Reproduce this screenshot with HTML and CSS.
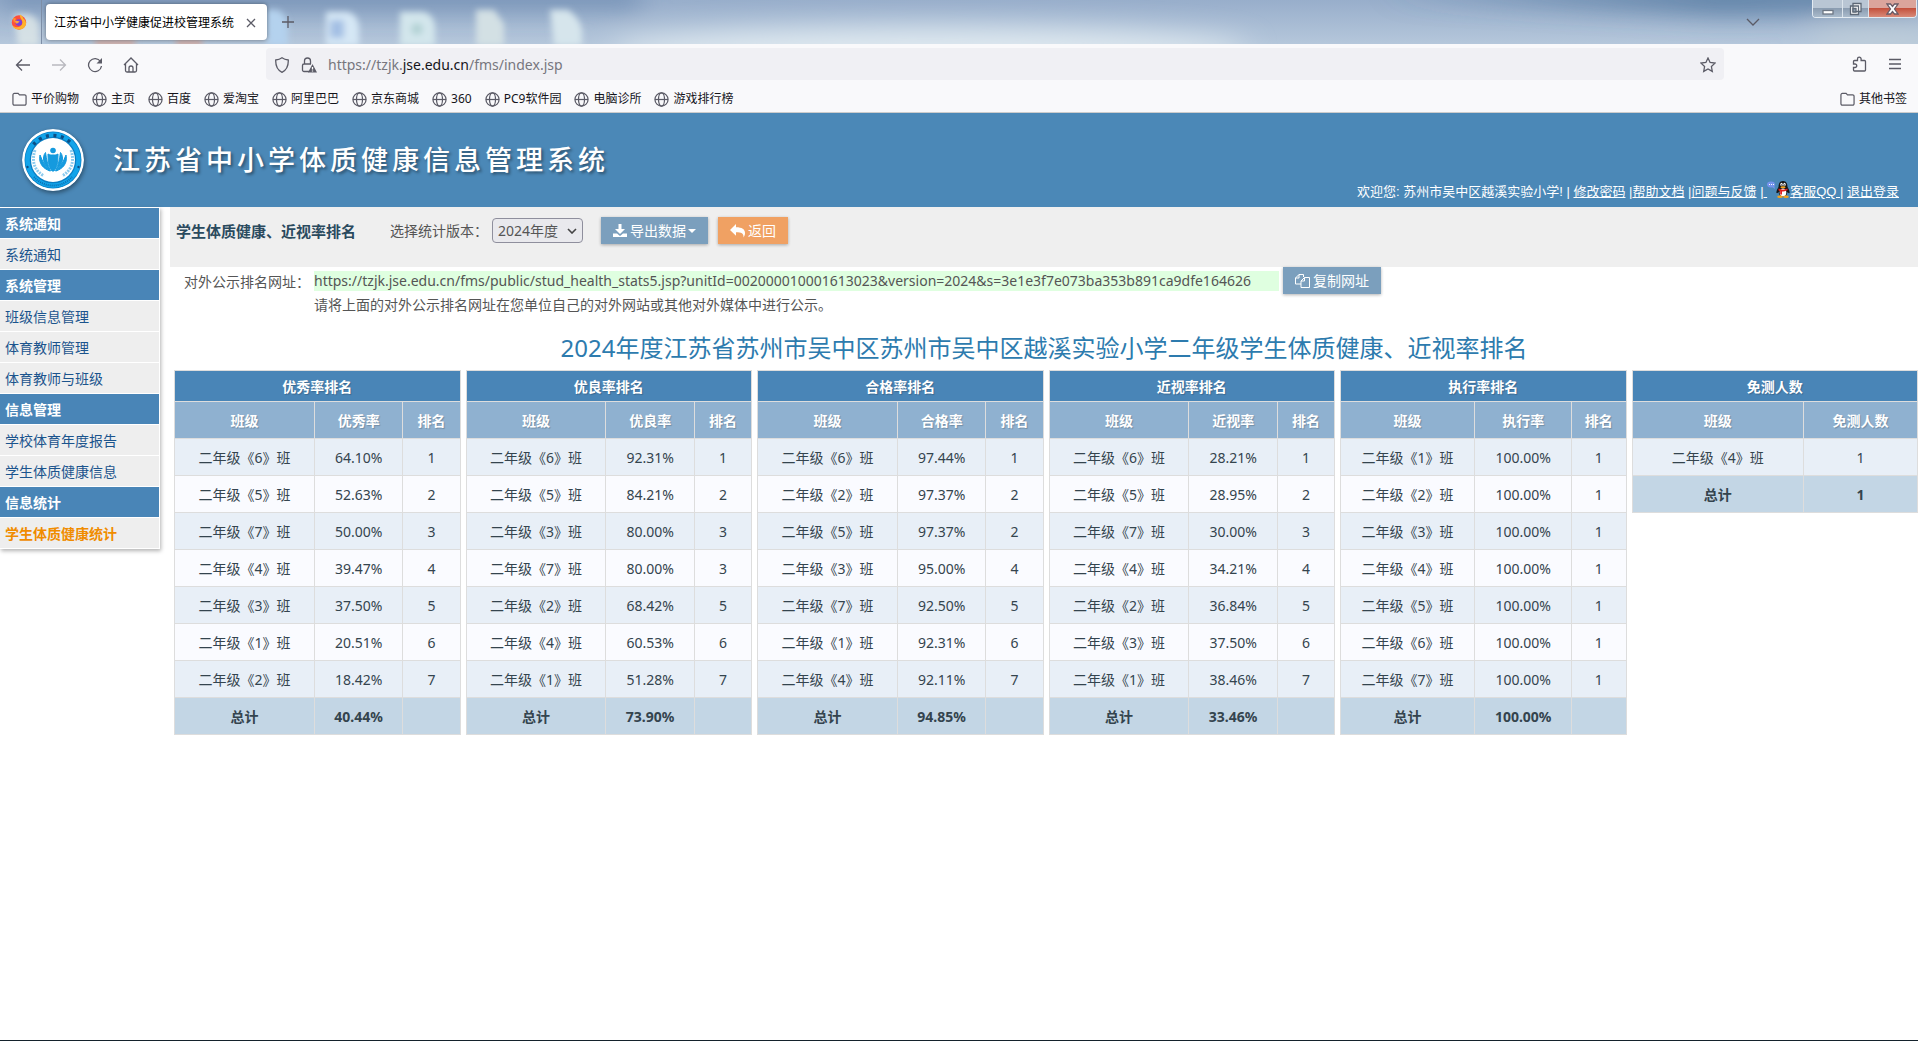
FILE: index.html
```html
<!DOCTYPE html>
<html lang="zh-CN">
<head>
  <meta charset="UTF-8" />
  <title>江苏省中小学健康促进校管理系统</title>
  <meta name="viewport" content="width=device-width, initial-scale=1.0" />
  <link rel="stylesheet" href="styles.css">
</head>
<body>
  <!-- shared icons -->
  <svg class="symbols" aria-hidden="true">
    <symbol id="folder" viewBox="0 0 16 16"><path d="M2.5 14h11a1.500 1.500 0 0 0 1.500-1.500v-8A1.500 1.500 0 0 0 13.500 3H8L6.500 1.500h-4A1.500 1.500 0 0 0 1 3v9.500A1.500 1.500 0 0 0 2.500 14z"/></symbol>
    <symbol id="globe" viewBox="0 0 16 16"><circle cx="8" cy="8" r="7"/><ellipse cx="8" cy="8" rx="3.200" ry="7"/><path d="M1 8h14"/></symbol>
  </svg>

  <div class="browser">
    <div class="tabbar">
      <svg class="glass" preserveAspectRatio="none" viewBox="0 0 1918 44" aria-hidden="true">
        <defs>
          <filter id="soft" x="-20%" y="-20%" width="140%" height="140%"><feGaussianBlur stdDeviation="3"/></filter>
          <filter id="haze" x="-20%" y="-60%" width="140%" height="220%"><feGaussianBlur stdDeviation="14"/></filter>
        </defs>
        <g filter="url(#haze)">
          <ellipse cx="930" cy="50" rx="320" ry="22" fill="#dfe9f0"/>
          <path d="M1380-10h540v16l-200 4z" fill="#436c95"/>
          <path d="M0-10h640v14H0z" fill="#5a7ba6"/>
          <ellipse cx="1880" cy="40" rx="70" ry="14" fill="#bfced9"/>
        </g>
        <g filter="url(#soft)">
          <path d="M14 14h12q14 2 13 16v16H18z" fill="#dfe8e8" opacity=".8"/>
          <path d="M266 10h12q10 6 10 18v18h-20z" fill="#b4d2ee"/>
          <path d="M326 12h22q11 4 11 16v18h-33z" fill="#d5e7f5"/>
          <path d="M330 20h14v18h-14z" fill="#a4c0e4"/>
          <path d="M400 12h24q11 4 11 16v18h-35z" fill="#d3e6ec"/>
          <circle cx="417" cy="29" r="6" fill="#b2d2d4"/>
          <path d="M476 10h18l10 14v22h-28z" fill="#d3e0e4"/>
          <path d="M550 10h18q12 8 14 20v16h-28z" fill="#d6e5ec"/>
          <path d="M95 40h40v6H95zM176 40h26v6h-26z" fill="#d9a79a"/>
        </g>
      </svg>
      <svg class="firefox" viewBox="0 0 16 16" aria-label="Firefox">
        <circle cx="8" cy="8.500" r="7.200" fill="#ff4f3a"/>
        <path d="M9 .5c2 1.200 3 2.500 3.300 4C14 5.500 15.500 8 15 10.500c-.8 3-3.500 5-7 5-3 0-5.500-1.500-6.600-4 4 3.500 9.500 1.500 10-2.500C11.800 5.500 8.500 4.500 9 .5z" fill="#ffb22c"/>
        <path d="M2 4c1 .3 2 .3 3 .4L3 9z" fill="#ff9a2b"/>
        <circle cx="7.800" cy="8.600" r="3.300" fill="#7b41d8"/>
        <path d="M4 7c2-.8 3 .5 4.500.2-.4 1.500-2 1.500-2.500 2.500-1.200-.3-2-1.200-2-2.700z" fill="#ffa436"/>
      </svg>
      <div class="tab">
        <span>江苏省中小学健康促进校管理系统</span>
        <button class="tab-close" aria-label="关闭标签页"><svg width="10" height="10" viewBox="0 0 10 10"><path d="M1 1l8 8M9 1L1 9"/></svg></button>
      </div>
      <button class="tab-new" aria-label="新建标签页"><svg width="12" height="12" viewBox="0 0 12 12"><path d="M6 0v12M0 6h12"/></svg></button>
      <button class="tab-list" aria-label="列出标签页"><svg width="14" height="8" viewBox="0 0 14 8"><path d="M1 1l6 6 6-6"/></svg></button>
      <div class="window-buttons">
        <button aria-label="最小化"><svg width="12" height="14" viewBox="0 0 12 14"><rect x="1" y="8.500" width="10" height="3.500" fill="#fff" stroke="#6d7784"/></svg></button>
        <button aria-label="还原"><svg width="13" height="14" viewBox="0 0 13 14"><path d="M4 1.500h8v8H4zM1.500 4h8v8.500h-8z" fill="#fff" stroke="#5d6876"/><path d="M4 6.500h3v3.500H4z" fill="#8fa0b2" stroke="#5d6876"/></svg></button>
        <button class="win-close" aria-label="关闭"><svg width="13" height="12" viewBox="0 0 13 12"><path d="M1 1h3.500l2 2.500L8.500 1H12L8.500 6l3.500 5H8.500l-2-2.500-2 2.500H1l3.500-5z" fill="#fff" stroke="#6a5b66"/></svg></button>
      </div>
    </div>

    <div class="navbar">
      <div class="nav-buttons">
        <button aria-label="后退"><svg width="16" height="16" viewBox="0 0 16 16"><path d="M15 8H2M7 2.500L1.500 8 7 13.500"/></svg></button>
        <button aria-label="前进" disabled><svg width="16" height="16" viewBox="0 0 16 16"><path d="M1 8h13M9 2.500L14.500 8 9 13.500"/></svg></button>
        <button aria-label="刷新"><svg width="16" height="16" viewBox="0 0 16 16"><path d="M13.500 4.500A6.500 6.500 0 1 0 14.500 9"/><path d="M15 1v5.500H9.500z" fill="#5b5b66" stroke="none"/></svg></button>
        <button aria-label="主页"><svg width="16" height="16" viewBox="0 0 16 16"><path d="M1 8l7-7 7 7M2.500 7v6.500a1.500 1.500 0 0 0 1.500 1.500h8a1.500 1.500 0 0 0 1.500-1.500V7M6 15v-4a2 2 0 0 1 4 0v4"/></svg></button>
      </div>
      <div class="address">
        <svg width="16" height="16" viewBox="0 0 16 16"><path d="M8 .8c2 1.500 4 2 6.300 2.200C14.500 9 13 13 8 15.300 3 13 1.500 9 1.700 3 4 2.800 6 2.300 8 .8z"/></svg>
        <svg width="16" height="16" viewBox="0 0 16 16"><path d="M8 14.500H3A1.500 1.500 0 0 1 1.500 13V8.500A1.500 1.500 0 0 1 3 7h7M3.500 7V4a3 3 0 0 1 6 0v3"/><path d="M11.500 7L16 15.500H7z" fill="#5b5b66" stroke="none"/><path d="M11.500 10v2.500M11.500 13.500v1" stroke="#fff"/></svg>
        <span class="url">https://tzjk.<b>jse.edu.cn</b>/fms/index.jsp</span>
        <button aria-label="为此页添加书签"><svg width="16" height="16" viewBox="0 0 16 16"><path d="M8 1l2.100 4.500 4.900.6-3.600 3.400.9 4.900L8 12l-4.300 2.400.9-4.900L1 6.100l4.900-.6z"/></svg></button>
      </div>
      <div class="nav-tools">
        <button aria-label="扩展"><svg width="16" height="16" viewBox="0 0 16 16"><path d="M6.500 4.500V3a1.800 1.800 0 0 1 3.600 0v1.500h3.400q1 0 1 1V14q0 1-1 1H3.500q-1 0-1-1v-2.500H4a1.700 1.700 0 0 0 0-3.500H2.500V5.500q0-1 1-1z"/></svg></button>
        <button aria-label="打开应用程序菜单"><svg width="14" height="14" viewBox="0 0 14 14"><path d="M1 2.500h12M1 7h12M1 11.500h12"/></svg></button>
      </div>
    </div>

    <nav class="bookmarks">
      <a href="#"><svg><use href="#folder"/></svg>平价购物</a>
      <a href="#"><svg><use href="#globe"/></svg>主页</a>
      <a href="#"><svg><use href="#globe"/></svg>百度</a>
      <a href="#"><svg><use href="#globe"/></svg>爱淘宝</a>
      <a href="#"><svg><use href="#globe"/></svg>阿里巴巴</a>
      <a href="#"><svg><use href="#globe"/></svg>京东商城</a>
      <a href="#"><svg><use href="#globe"/></svg>360</a>
      <a href="#"><svg><use href="#globe"/></svg>PC9软件园</a>
      <a href="#"><svg><use href="#globe"/></svg>电脑诊所</a>
      <a href="#"><svg><use href="#globe"/></svg>游戏排行榜</a>
      <a href="#" class="other"><svg><use href="#folder"/></svg>其他书签</a>
    </nav>
  </div>

  <header class="header">
    <svg class="logo" viewBox="0 0 62 62" aria-hidden="true">
      <circle cx="31" cy="31" r="31" fill="#fff"/>
      <circle cx="31" cy="31" r="28.500" fill="#0a7fc4"/>
      <circle cx="31" cy="31" r="25.500" fill="none" stroke="#12a4ea" stroke-width="4.500"/>
      <path d="M11.500 15.500A25.500 25.500 0 0 1 50.500 15.500" fill="none" stroke="#0b4f86" stroke-width="3.500" stroke-dasharray="3 4.500"/>
      <path d="M12 48A25.500 25.500 0 0 0 50 48" fill="none" stroke="#0d6fb0" stroke-width="2" stroke-dasharray="1 1"/>
      <circle cx="31" cy="31" r="22" fill="#fff"/>
      <circle cx="5.500" cy="38" r="1.200" fill="#0b4f86"/><circle cx="56.500" cy="38" r="1.200" fill="#0b4f86"/>
      <path d="M13 21c-4 12 0 21 9 26M49 21c4 12 0 21-9 26" fill="none" stroke="#8ccbee" stroke-width="3" stroke-dasharray="2 1"/>
      <circle cx="31" cy="21.500" r="2.800" fill="#159ade"/>
      <path d="M31 26c-3 0-3 0-5-1 0 9 1 13 4 17h2c3-4 4-8 4-17-2 1-2 1-5 1zM23.500 23.500c-4 5-2 13 5 18.500-3-6-4-12-5-18.500zM38.500 23.500c4 5 2 13-5 18.500 3-6 4-12 5-18.500zM18 26c-2 9 4 14 10 16-5-4-7-9-10-16zM44 26c2 9-4 14-10 16 5-4 7-9 10-16z" fill="#159ade" stroke="#159ade"/>
    </svg>
    <h1>江苏省中小学体质健康信息管理系统</h1>
    <div class="user-links">
      欢迎您: 苏州市吴中区越溪实验小学! | <a href="#">修改密码</a> |<a href="#">帮助文档</a> |<a href="#">问题与反馈</a> |<a href="#">&nbsp;<svg class="qq" width="23" height="17" viewBox="0 0 23 17" aria-hidden="true">
        <ellipse cx="4" cy="3.500" rx="4" ry="3" fill="#7593ec"/><path d="M5 6l3 2-1-4z" fill="#7593ec"/>
        <path d="M2 3.500h1M4 3.500h1M6 3.500h1" stroke="#fff"/>
        <path d="M16 0c3.500 0 4.500 3 4.500 6 1 2 2.500 4 2 6-1 .5-1.500-.5-2-1-.5 3-2 5-4.500 5s-4-2-4.500-5c-.5.500-1 1.500-2 1-.5-2 1-4 2-6C11.500 3 12.500 0 16 0z" fill="#151515"/>
        <ellipse cx="16" cy="11.500" rx="3.300" ry="4" fill="#fff"/>
        <ellipse cx="14.500" cy="3.500" rx="1.200" ry="1.700" fill="#fff"/><ellipse cx="17.500" cy="3.500" rx="1.200" ry="1.700" fill="#fff"/>
        <path d="M14.500 3.500v1M17.500 3.500v1" stroke="#151515"/>
        <ellipse cx="16" cy="6.200" rx="2.600" ry="1" fill="#f5a11a"/>
        <path d="M11.500 7.500c3 1.500 6 1.500 9 0v1.800c-2 1-4 1.200-5.500 1.200v3h-1.800v-3.300c-1-.2-1.700-.7-1.700-1.200z" fill="#e01d1d"/>
        <ellipse cx="13" cy="15.800" rx="2.800" ry="1.200" fill="#f5a11a"/><ellipse cx="19" cy="15.800" rx="2.800" ry="1.200" fill="#f5a11a"/>
      </svg>客服QQ </a>| <a href="#">退出登录</a>
    </div>
  </header>

  <div class="content">
    <nav class="sidebar">
      <h2>系统通知</h2>
      <a href="#">系统通知</a>
      <h2>系统管理</h2>
      <a href="#">班级信息管理</a>
      <a href="#">体育教师管理</a>
      <a href="#">体育教师与班级</a>
      <h2>信息管理</h2>
      <a href="#">学校体育年度报告</a>
      <a href="#">学生体质健康信息</a>
      <h2>信息统计</h2>
      <a href="#" class="active">学生体质健康统计</a>
    </nav>

    <main>
      <div class="toolbar">
        <h3>学生体质健康、近视率排名</h3>
        <label for="version">选择统计版本<span class="colon">：</span></label>
        <span class="select">
          <select id="version"><option>2024年度</option></select>
          <svg width="10" height="6" viewBox="0 0 10 6"><path d="M1 1l4 4 4-4"/></svg>
        </span>
        <button class="btn btn-export"><svg width="14" height="14" viewBox="0 0 14 14"><path d="M5.500 0h3v5H12L7 10 2 5h3.500zM0 9.500h4l3 2.500 3-2.500h4V13H0z"/></svg>导出数据<i class="caret"></i></button>
        <button class="btn btn-back"><svg width="15" height="14" viewBox="0 0 15 14"><path d="M6 0v3.300c6 0 9 2 9 6 0 1.700-.7 3.200-1.500 4.200.3-4-2-5.200-7.500-5.200v3.500L0 6z"/></svg>返回</button>
      </div>

      <div class="public-url">
        <span class="url-label">对外公示排名网址<span class="colon">：</span></span>
        <div>
          <div class="url-line">
            <span class="url-text">https://tzjk.jse.edu.cn/fms/public/stud_health_stats5.jsp?unitId=002000010001613023&amp;version=2024&amp;s=3e1e3f7e073ba353b891ca9dfe164626</span>
            <button class="btn"><svg class="copy" width="15" height="14" viewBox="0 0 15 14"><path d="M4 .5h4.500v2.500M4 .5L.5 4v6H6M4 .5V4H.5M9.500 3.500h5v10H6V7l3.500-3.500V7H6"/></svg>复制网址</button>
          </div>
          <p>请将上面的对外公示排名网址在您单位自己的对外网站或其他对外媒体中进行公示。</p>
        </div>
      </div>

      <h2 class="title">2024年度江苏省苏州市吴中区苏州市吴中区越溪实验小学二年级学生体质健康、近视率排名</h2>

      <div class="tables">
        <table class="rank">
          <colgroup><col class="c-class"><col class="c-rate"><col></colgroup>
          <thead>
            <tr><th colspan="3">优秀率排名</th></tr>
            <tr><th>班级</th><th>优秀率</th><th>排名</th></tr>
          </thead>
          <tbody>
            <tr><td>二年级《6》班</td><td>64.10%</td><td>1</td></tr>
            <tr><td>二年级《5》班</td><td>52.63%</td><td>2</td></tr>
            <tr><td>二年级《7》班</td><td>50.00%</td><td>3</td></tr>
            <tr><td>二年级《4》班</td><td>39.47%</td><td>4</td></tr>
            <tr><td>二年级《3》班</td><td>37.50%</td><td>5</td></tr>
            <tr><td>二年级《1》班</td><td>20.51%</td><td>6</td></tr>
            <tr><td>二年级《2》班</td><td>18.42%</td><td>7</td></tr>
          </tbody>
          <tfoot><tr><td>总计</td><td>40.44%</td><td></td></tr></tfoot>
        </table>

        <table class="rank">
          <colgroup><col class="c-class"><col class="c-rate"><col></colgroup>
          <thead>
            <tr><th colspan="3">优良率排名</th></tr>
            <tr><th>班级</th><th>优良率</th><th>排名</th></tr>
          </thead>
          <tbody>
            <tr><td>二年级《6》班</td><td>92.31%</td><td>1</td></tr>
            <tr><td>二年级《5》班</td><td>84.21%</td><td>2</td></tr>
            <tr><td>二年级《3》班</td><td>80.00%</td><td>3</td></tr>
            <tr><td>二年级《7》班</td><td>80.00%</td><td>3</td></tr>
            <tr><td>二年级《2》班</td><td>68.42%</td><td>5</td></tr>
            <tr><td>二年级《4》班</td><td>60.53%</td><td>6</td></tr>
            <tr><td>二年级《1》班</td><td>51.28%</td><td>7</td></tr>
          </tbody>
          <tfoot><tr><td>总计</td><td>73.90%</td><td></td></tr></tfoot>
        </table>

        <table class="rank">
          <colgroup><col class="c-class"><col class="c-rate"><col></colgroup>
          <thead>
            <tr><th colspan="3">合格率排名</th></tr>
            <tr><th>班级</th><th>合格率</th><th>排名</th></tr>
          </thead>
          <tbody>
            <tr><td>二年级《6》班</td><td>97.44%</td><td>1</td></tr>
            <tr><td>二年级《2》班</td><td>97.37%</td><td>2</td></tr>
            <tr><td>二年级《5》班</td><td>97.37%</td><td>2</td></tr>
            <tr><td>二年级《3》班</td><td>95.00%</td><td>4</td></tr>
            <tr><td>二年级《7》班</td><td>92.50%</td><td>5</td></tr>
            <tr><td>二年级《1》班</td><td>92.31%</td><td>6</td></tr>
            <tr><td>二年级《4》班</td><td>92.11%</td><td>7</td></tr>
          </tbody>
          <tfoot><tr><td>总计</td><td>94.85%</td><td></td></tr></tfoot>
        </table>

        <table class="rank">
          <colgroup><col class="c-class"><col class="c-rate"><col></colgroup>
          <thead>
            <tr><th colspan="3">近视率排名</th></tr>
            <tr><th>班级</th><th>近视率</th><th>排名</th></tr>
          </thead>
          <tbody>
            <tr><td>二年级《6》班</td><td>28.21%</td><td>1</td></tr>
            <tr><td>二年级《5》班</td><td>28.95%</td><td>2</td></tr>
            <tr><td>二年级《7》班</td><td>30.00%</td><td>3</td></tr>
            <tr><td>二年级《4》班</td><td>34.21%</td><td>4</td></tr>
            <tr><td>二年级《2》班</td><td>36.84%</td><td>5</td></tr>
            <tr><td>二年级《3》班</td><td>37.50%</td><td>6</td></tr>
            <tr><td>二年级《1》班</td><td>38.46%</td><td>7</td></tr>
          </tbody>
          <tfoot><tr><td>总计</td><td>33.46%</td><td></td></tr></tfoot>
        </table>

        <table class="rank rank-run">
          <colgroup><col class="c-class"><col class="c-rate"><col></colgroup>
          <thead>
            <tr><th colspan="3">执行率排名</th></tr>
            <tr><th>班级</th><th>执行率</th><th>排名</th></tr>
          </thead>
          <tbody>
            <tr><td>二年级《1》班</td><td>100.00%</td><td>1</td></tr>
            <tr><td>二年级《2》班</td><td>100.00%</td><td>1</td></tr>
            <tr><td>二年级《3》班</td><td>100.00%</td><td>1</td></tr>
            <tr><td>二年级《4》班</td><td>100.00%</td><td>1</td></tr>
            <tr><td>二年级《5》班</td><td>100.00%</td><td>1</td></tr>
            <tr><td>二年级《6》班</td><td>100.00%</td><td>1</td></tr>
            <tr><td>二年级《7》班</td><td>100.00%</td><td>1</td></tr>
          </tbody>
          <tfoot><tr><td>总计</td><td>100.00%</td><td></td></tr></tfoot>
        </table>

        <table class="rank rank-exempt">
          <colgroup><col class="c-class"><col></colgroup>
          <thead>
            <tr><th colspan="2">免测人数</th></tr>
            <tr><th>班级</th><th>免测人数</th></tr>
          </thead>
          <tbody>
            <tr><td>二年级《4》班</td><td>1</td></tr>
          </tbody>
          <tfoot><tr><td>总计</td><td>1</td></tr></tfoot>
        </table>
      </div>
    </main>
  </div>
</body>
</html>
```
FILE: styles.css
```css
* {
  box-sizing: border-box;
}
body {
  display: flex;
  flex-direction: column;
  min-height: 100vh;
  margin: 0;
  background: #fff;
  border-bottom: 1px solid #14222c;
  color: #555;
  font-family: "Noto Sans", "Noto Sans CJK SC", sans-serif;
  font-size: 14px;
  line-height: 20px;
}
h1, h2, h3, p {
  margin: 0;
}
button, select {
  font: inherit;
}
button {
  padding: 0;
  border: none;
  background: none;
  cursor: pointer;
}
svg {
  flex: none;
}
.symbols {
  position: absolute;
  width: 0;
  height: 0;
}

/* browser window */
.browser {
  background: #f9f9fb;
  border-bottom: 1px solid #ccc;
  color: #15141a;
  font-size: 12px;
}
.browser svg {
  display: block;
  fill: none;
  stroke: #5b5b66;
  stroke-width: 1.3;
}
.browser .firefox, .browser .glass {
  stroke: none;
}
.tabbar {
  position: relative;
  display: flex;
  align-items: center;
  height: 44px;
  background: linear-gradient(#98aecb, #b5c7db);
}
.tabbar > * {
  position: relative;
}
.tabbar .glass {
  position: absolute;
  inset: 0;
  width: 100%;
  height: 100%;
}
.firefox {
  width: 16px;
  height: 16px;
  margin: 0 14px 0 11px;
}
.tab {
  display: flex;
  align-items: center;
  justify-content: space-between;
  width: 221px;
  height: 36px;
  margin-left: 5px;
  padding: 1px 11px 0 8px;
  border-radius: 4px;
  background: #fff;
  box-shadow: 0 0 4px rgba(0, 0, 0, 0.4);
  color: #000;
}
.tab::before {
  content: "";
  position: absolute;
  left: -5px;
  top: -4px;
  width: 1px;
  height: 44px;
  background: #7d8ea6;
}
.tab-new {
  margin-left: 15px;
}
.tab-list {
  margin: 0 52px 0 auto;
}
.window-buttons {
  display: flex;
  align-self: flex-start;
  margin-right: 1px;
  border: 1px solid #e3ebf2;
  border-top: none;
  border-radius: 0 0 4px 4px;
  overflow: hidden;
}
.window-buttons button {
  display: flex;
  align-items: center;
  justify-content: center;
  width: 29px;
  height: 17px;
  background: linear-gradient(#b9c6d4 50%, #8b9db1 50%, #a9bacb);
}
.window-buttons button + button {
  width: 26px;
  border-left: 1px solid #dbe4ec;
}
.window-buttons button.win-close:last-child {
  width: 48px;
  background: linear-gradient(#dba59c 50%, #c4523e 50%, #d98a78);
}
.navbar {
  display: flex;
  align-items: center;
  height: 40px;
}
.nav-buttons {
  display: flex;
  gap: 20px;
  width: 266px;
  padding: 1px 0 0 15px;
}
.nav-buttons button:disabled {
  opacity: 0.4;
}
.address {
  display: flex;
  flex: 1;
  align-items: center;
  gap: 11px;
  height: 32px;
  padding: 1px 8px 0;
  border-radius: 4px;
  background: #f0f0f4;
}
.url {
  flex: 1;
  color: #77767e;
  font-size: 14px;
}
.url b {
  color: #15141a;
  font-weight: normal;
}
.nav-tools {
  display: flex;
  align-items: center;
  justify-content: flex-end;
  gap: 21px;
  width: 194px;
  padding-right: 16px;
}
.bookmarks {
  display: flex;
  align-items: center;
  gap: 13px;
  height: 28px;
  padding: 2px 11px 0 12px;
}
.bookmarks a {
  display: flex;
  align-items: center;
  gap: 4px;
  color: #15141a;
  text-decoration: none;
}
.bookmarks svg {
  width: 15px;
  height: 15px;
}
.bookmarks .other {
  margin-left: auto;
}

/* page header */
.header {
  display: flex;
  align-items: center;
  height: 94px;
  padding: 0 19px 0 22px;
  background: #4b88b7;
  color: #fff;
}
.logo {
  width: 62px;
  height: 62px;
  border-radius: 50%;
  box-shadow: 1px 2px 4px rgba(0, 0, 0, 0.4);
}
.header h1 {
  margin-left: 29px;
  font-size: 27px;
  font-weight: 500;
  letter-spacing: 4px;
  line-height: 32px;
  text-shadow: 2px 2px 3px rgba(0, 0, 0, 0.4);
}
.user-links {
  align-self: flex-end;
  margin-left: auto;
  padding-bottom: 5px;
  font-family: "Liberation Sans", "Noto Sans CJK SC", sans-serif;
  font-size: 13px;
}
.user-links a {
  color: #fff;
}
.qq {
  vertical-align: -2px;
}

/* left menu */
.content {
  display: flex;
  align-items: flex-start;
}
.sidebar {
  width: 160px;
  margin-right: 10px;
  padding-top: 1px;
  border-right: 1px solid #fff;
  box-shadow: 1px 2px 4px rgba(0, 0, 0, 0.3);
}
.sidebar h2, .sidebar a {
  display: block;
  height: 31px;
  padding: 6px 5px 4px;
  border-bottom: 1px solid #fff;
  font-size: 14px;
  line-height: 20px;
}
.sidebar h2 {
  background: #4985b7;
  color: #fff;
}
.sidebar a {
  background: #eee;
  color: #1b548d;
  text-decoration: none;
}
.sidebar .active {
  color: #f08c00;
  font-weight: bold;
}

/* main area */
main {
  flex: 1;
  min-width: 0;
}
.toolbar {
  display: flex;
  align-items: center;
  height: 60px;
  padding: 0 6px 13px;
  background: #efefef;
}
.toolbar h3 {
  margin-right: 34px;
  color: #2a4a5e;
  font-size: 15px;
}
.colon {
  font-family: "Noto Sans CJK TC", sans-serif;
}
.select {
  position: relative;
  margin: 0 18px 0 4px;
}
.select select {
  display: block;
  width: 91px;
  height: 25px;
  padding: 0 5px;
  border: 1px solid #8f8f9d;
  border-radius: 4px;
  background: #e9e9ed;
  color: #555;
  appearance: none;
}
.select svg {
  position: absolute;
  right: 6px;
  top: 10px;
  fill: none;
  stroke: #444;
  stroke-width: 1.6;
}
.btn {
  display: flex;
  align-items: center;
  gap: 3px;
  height: 27px;
  padding: 0 12px;
  background: #7b9fbd;
  box-shadow: 0 1px 3px rgba(0, 0, 0, 0.3);
  color: #fff;
}
.btn svg {
  fill: #fff;
}
.btn .copy {
  fill: none;
  stroke: #fff;
}
.btn-back {
  margin-left: 10px;
  background: #f0a163;
}
.caret {
  border: 4px solid transparent;
  border-top-color: #fff;
  border-bottom: none;
  margin-left: -1px;
}
.public-url {
  display: flex;
  padding-left: 14px;
}
.url-label {
  width: 130px;
  padding-top: 4px;
}
.url-line {
  display: flex;
  align-items: center;
  gap: 4px;
}
.url-text {
  min-width: 965px;
  background: #dfffe0;
}
.public-url p {
  margin-top: 1px;
}
.title {
  margin: 17px 0 6px;
  color: #2d7bae;
  font-size: 24px;
  font-weight: normal;
  line-height: 32px;
  text-align: center;
}
.tables {
  display: grid;
  grid-template-columns: repeat(6, 1fr);
  align-items: start;
  gap: 5px;
  padding-left: 4px;
}
.rank {
  width: 100%;
  border-collapse: collapse;
  table-layout: fixed;
  color: #34444e;
  text-align: center;
}
.rank .c-class {
  width: 49%;
}
.rank .c-rate {
  width: 31%;
}
.rank-run .c-class {
  width: 47%;
}
.rank-run .c-rate {
  width: 34%;
}
.rank-exempt .c-class {
  width: 60%;
}
.rank th, .rank td {
  height: 37px;
  padding: 2px 0 0;
  border: 1px solid #ddd;
}
.rank th {
  background: #8fb1d0;
  color: #fff;
  text-shadow: 1px 1px 1px rgba(0, 0, 0, 0.2);
}
.rank th[colspan] {
  height: 31px;
  background: #4985b7;
}
.rank tbody tr:nth-child(odd) {
  background: #e8eff7;
}
.rank tbody tr:nth-child(even) {
  background: #fafbff;
}
.rank tfoot {
  background: #c3d6e5;
  font-weight: bold;
}
```
